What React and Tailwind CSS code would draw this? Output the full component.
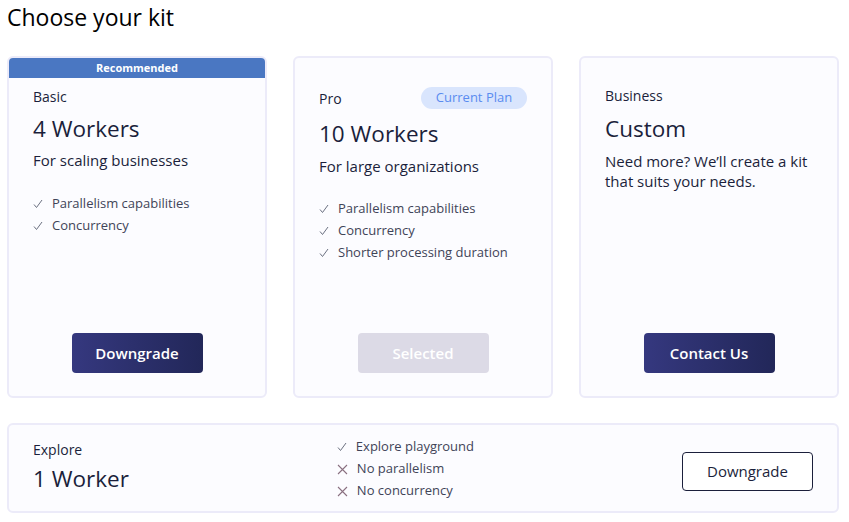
import React from "react";

const F = { fontFamily: "'Open Sans', 'Noto Sans', sans-serif" };

function Check() {
  return (
    <svg width="10" height="10" viewBox="0 0 10 10" className="shrink-0">
      <path d="M1 5.5 L3.5 8.5 L9 1" fill="none" stroke="#6b7080" strokeWidth="1" />
    </svg>
  );
}
function Cross() {
  return (
    <svg width="11" height="11" viewBox="0 0 11 11" className="shrink-0">
      <path d="M1 1 L10 10 M10 1 L1 10" fill="none" stroke="#8a7080" strokeWidth="1.1" />
    </svg>
  );
}

function Feature({ children, ok = true }) {
  return (
    <li className="flex items-center gap-[9px] h-[22px] text-[13px] text-[#3f4458]">
      {ok ? <Check /> : <Cross />}
      <span>{children}</span>
    </li>
  );
}

function Card({ band, children, button }) {
  return (
    <div className="flex flex-col h-[342px] rounded-md border-2 border-[#ecebf9] bg-[#fcfcff] overflow-hidden">
      {band ? (
        <div className="h-[20px] bg-[#4a77c2] text-white text-[11px] font-bold flex items-center justify-center">
          Recommended
        </div>
      ) : null}
      <div className={"flex flex-col flex-1 px-[24px] " + (band ? "pt-[9px]" : "pt-[29px]")}>
        {children}
        <div className="mt-auto mb-[23px] flex justify-center">{button}</div>
      </div>
    </div>
  );
}

function DarkBtn({ children }) {
  return (
    <button className="w-[131px] h-[40px] rounded-[4px] bg-gradient-to-r from-[#35387f] to-[#222759] text-white text-[15px] font-semibold">
      {children}
    </button>
  );
}

export default function App() {
  return (
    <div style={F} className="w-[849px] h-[522px] bg-white text-[#1b1f3b]">
      <h1 className="pl-[7px] pt-[3px] text-[23px] leading-[28px] font-medium text-black">Choose your kit</h1>
      <div className="mt-[25px] px-[7px] grid grid-cols-[260px_260px_260px] gap-[26px]">
        <Card band button={<DarkBtn>Downgrade</DarkBtn>}>
          <div className="text-[14px] leading-[20px] font-medium">Basic</div>
          <div className="mt-[8px] text-[22.5px] leading-[28px] font-medium">4 Workers</div>
          <div className="mt-[7px] text-[15px] leading-[20px] font-medium">For scaling businesses</div>
          <ul className="mt-[23px]">
            <Feature>Parallelism capabilities</Feature>
            <Feature>Concurrency</Feature>
          </ul>
        </Card>
        <Card button={<button className="w-[131px] h-[40px] rounded-[4px] bg-[#dcdae6] text-white text-[15px] font-semibold">Selected</button>}>
          <div className="flex items-center justify-between h-[22px]">
            <span className="text-[14px] font-medium">Pro</span>
            <span className="h-[22px] w-[106px] rounded-full bg-[#d9e5fd] text-[#5a8cf0] text-[13px] flex items-center justify-center">
              Current Plan
            </span>
          </div>
          <div className="mt-[11px] text-[22.5px] leading-[28px] font-medium">10 Workers</div>
          <div className="mt-[8px] text-[15px] leading-[20px] font-medium">For large organizations</div>
          <ul className="mt-[22px]">
            <Feature>Parallelism capabilities</Feature>
            <Feature>Concurrency</Feature>
            <Feature>Shorter processing duration</Feature>
          </ul>
        </Card>
        <Card button={<DarkBtn>Contact Us</DarkBtn>}>
          <div className="-mt-[1px] text-[14px] leading-[20px] font-medium">Business</div>
          <div className="mt-[9px] text-[22.5px] leading-[28px] font-medium">Custom</div>
          <div className="mt-[8px] text-[15px] leading-[20px] font-medium">
            Need more? We’ll create a kit
            <br />
            that suits your needs.
          </div>
        </Card>
      </div>
      <div className="mt-[25px] mx-[7px] w-[832px] h-[90px] rounded-md border-2 border-[#ecebf9] bg-[#fcfcff] flex items-center justify-between pl-[24px] pr-[24px]">
        <div className="flex flex-col mb-[3px]">
          <span className="text-[14px] leading-[20px] font-medium">Explore</span>
          <span className="mt-[5px] text-[22.5px] leading-[28px] font-medium">1 Worker</span>
        </div>
        <ul className="mt-[2px]">
          <Feature>Explore playground</Feature>
          <Feature ok={false}>No parallelism</Feature>
          <Feature ok={false}>No concurrency</Feature>
        </ul>
        <button className="mt-[6px] w-[131px] h-[39px] rounded-[4px] border border-[#1b1f3b] bg-white text-[15px] font-medium text-[#1b1f3b]">
          Downgrade
        </button>
      </div>
    </div>
  );
}
